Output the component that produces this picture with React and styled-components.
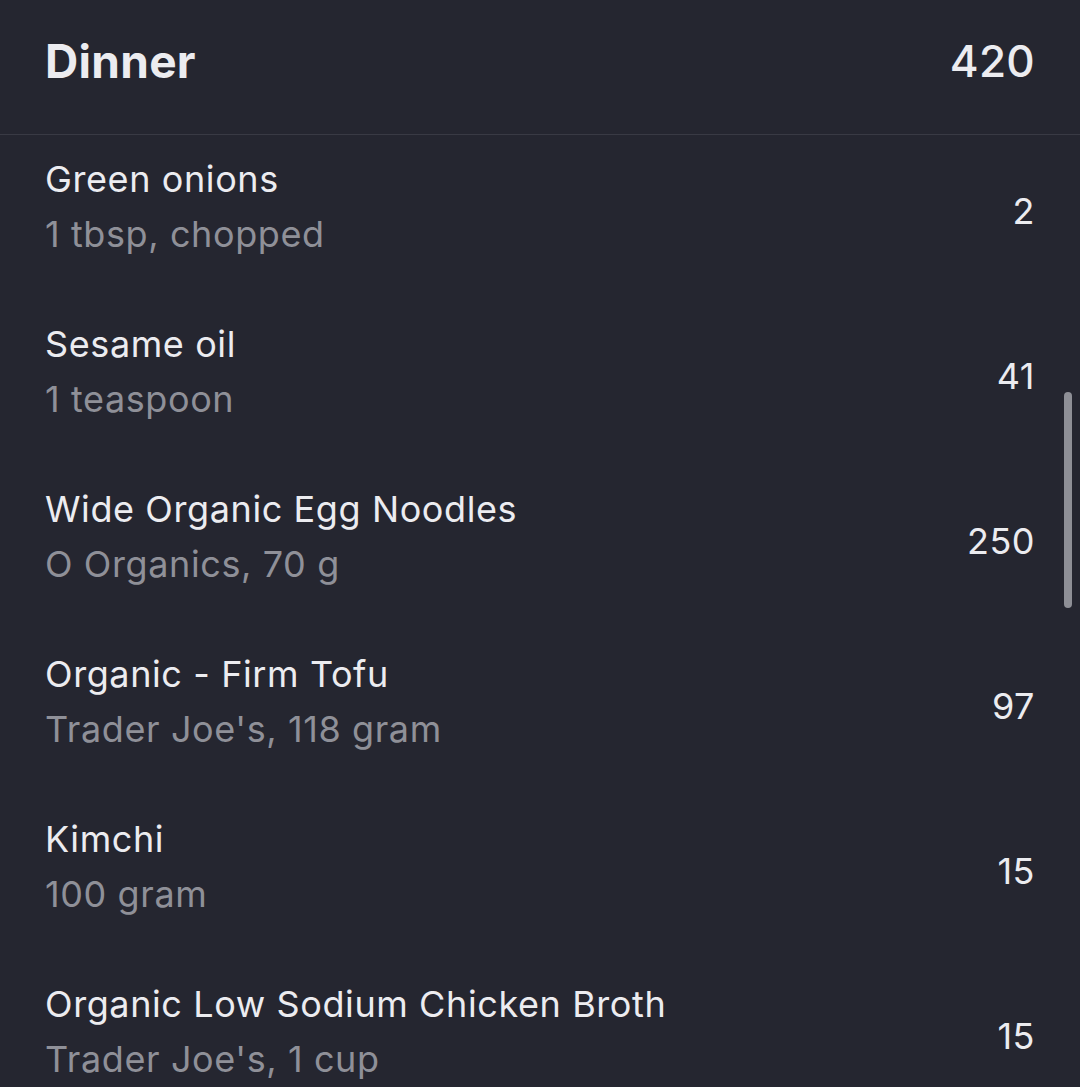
import React from "react";
import styled, { createGlobalStyle } from "styled-components";

const GlobalStyle = createGlobalStyle`
  html, body {
    margin: 0;
    padding: 0;
    background: #252630;
    height: 1087px;
    overflow: hidden;
  }
  body {
    font-family: Inter, "Noto Sans", "Liberation Sans", sans-serif;
    -webkit-font-smoothing: antialiased;
  }
`;

const foods = [
  { name: "Green onions", detail: "1 tbsp, chopped", kcal: 2 },
  { name: "Sesame oil", detail: "1 teaspoon", kcal: 41 },
  { name: "Wide Organic Egg Noodles", detail: "O Organics, 70 g", kcal: 250 },
  { name: "Organic - Firm Tofu", detail: "Trader Joe's, 118 gram", kcal: 97 },
  { name: "Kimchi", detail: "100 gram", kcal: 15 },
  {
    name: "Organic Low Sodium Chicken Broth",
    detail: "Trader Joe's, 1 cup",
    kcal: 15,
  },
];

const Screen = styled.div`
  position: relative;
  width: 1080px;
  height: 1087px;
  overflow: hidden;
  background: #252630;
`;

const Header = styled.header`
  display: flex;
  justify-content: space-between;
  align-items: center;
  height: 135px;
  padding: 0 45px 0 45px;
  border-bottom: 1px solid #393a44;
  box-sizing: border-box;
`;

const Title = styled.h1`
  margin: 0;
  font-size: 46px;
  font-weight: 700;
  color: #ececf0;
  letter-spacing: 0.3px;
  line-height: 55px;
  padding-bottom: 12px;
`;

const Total = styled.span`
  font-size: 44px;
  font-weight: 500;
  color: #ececf0;
  line-height: 55px;
  letter-spacing: 0.3px;
  padding-bottom: 12px;
`;

const List = styled.ul`
  list-style: none;
  margin: 0;
  padding: 0;
`;

const Row = styled.li`
  display: flex;
  justify-content: space-between;
  align-items: center;
  height: 165px;
  padding: 17px 45px 38px 45px;
  box-sizing: border-box;
`;

const Info = styled.div`
  display: flex;
  flex-direction: column;
`;

const Line = styled.span`
  font-size: 36px;
  line-height: 55px;
  letter-spacing: 0.6px;
  color: ${(p) => (p.$muted ? "#8f9098" : "#ececf0")};
`;

const Kcal = styled(Line)`
  padding-top: 8px;
  letter-spacing: 0.5px;
`;

const Scrollbar = styled.div`
  position: absolute;
  left: 1064px;
  top: 392px;
  width: 8px;
  height: 216px;
  border-radius: 4px;
  background: #8e8f96;
`;

export default function App() {
  return (
    <Screen>
      <GlobalStyle />
      <Header>
        <Title>Dinner</Title>
        <Total>420</Total>
      </Header>
      <List>
        {foods.map((f) => (
          <Row key={f.name}>
            <Info>
              <Line>{f.name}</Line>
              <Line $muted>{f.detail}</Line>
            </Info>
            <Kcal>{f.kcal}</Kcal>
          </Row>
        ))}
      </List>
      <Scrollbar />
    </Screen>
  );
}
